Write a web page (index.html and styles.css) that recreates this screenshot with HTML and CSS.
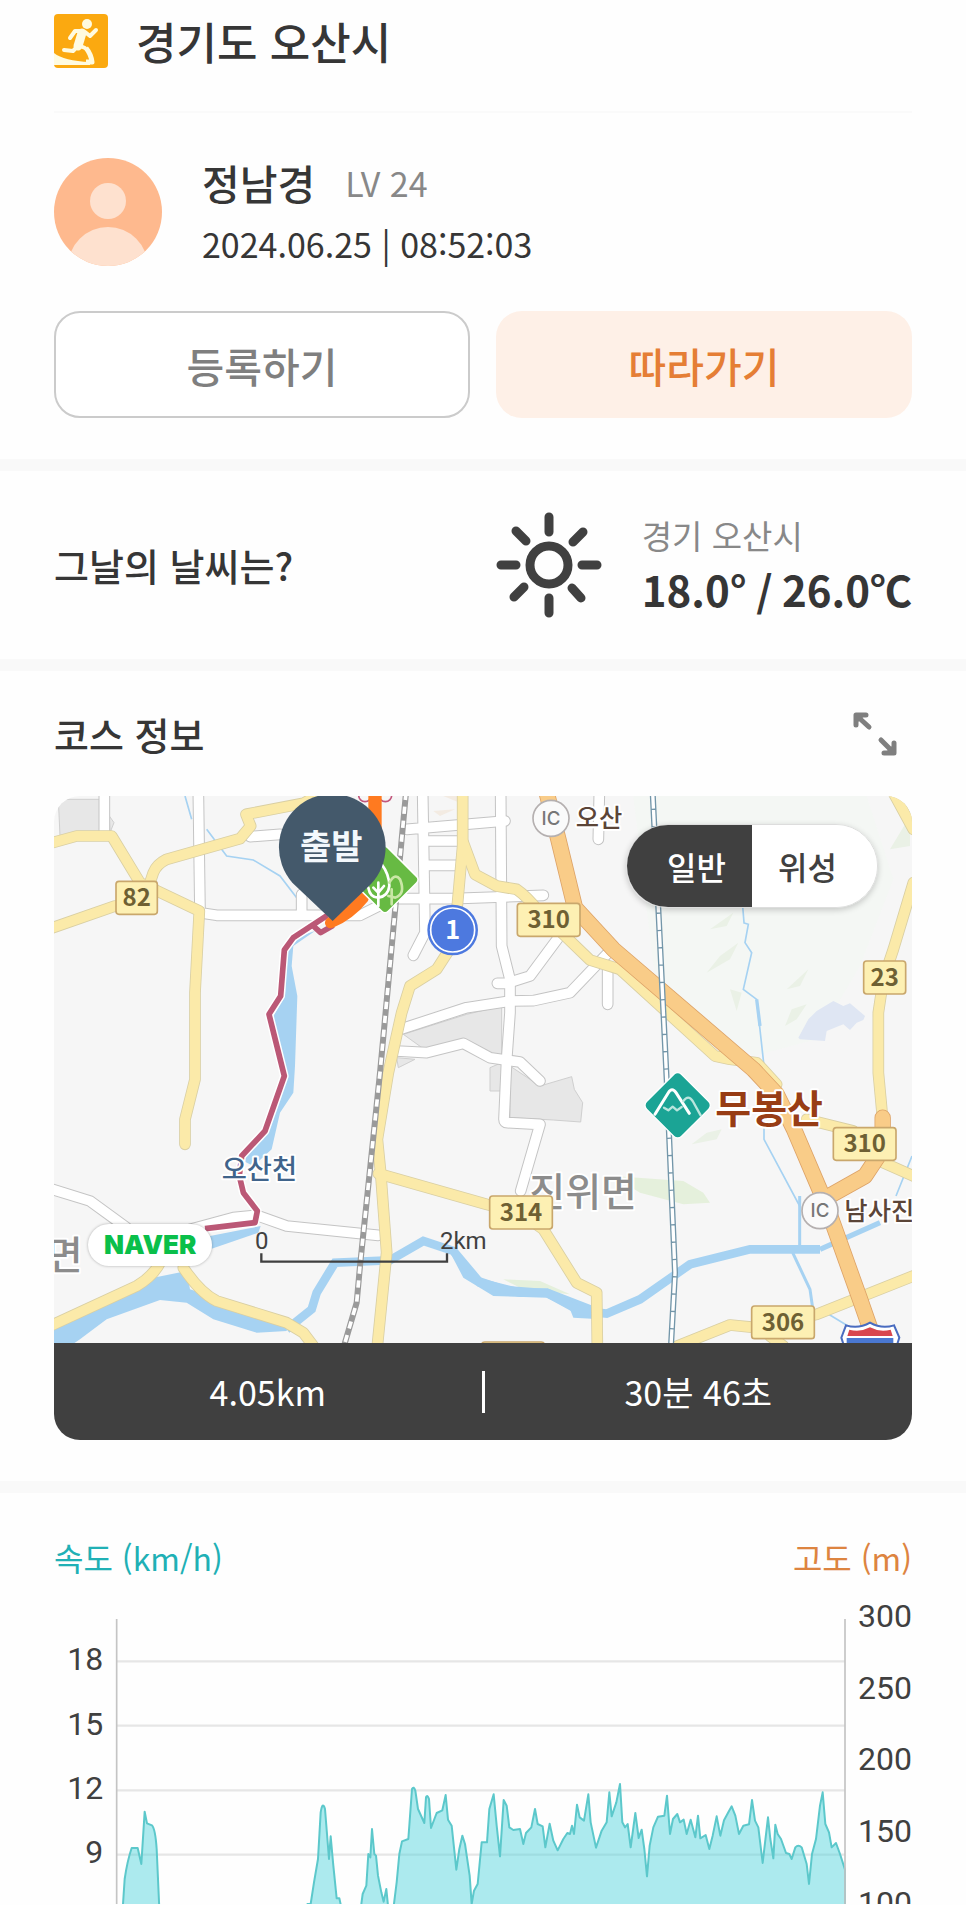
FILE: index.html
```html
<!DOCTYPE html>
<html lang="ko">

<head>
    <meta charset="UTF-8">
    <meta name="viewport" content="width=device-width, initial-scale=1.0">
    <title>경기도 오산시</title>
    <link rel="stylesheet" href="styles.css">
</head>

<body>
    <header class="page-header">
        <svg class="run-icon" viewBox="0 0 54 54" aria-hidden="true">
            <rect width="54" height="54" rx="4" fill="#fba910"/>
            <path d="M0 39Q10 47 36 48V51H0Z" fill="#fffbe0"/>
            <circle cx="33" cy="10" r="5" fill="#fffbe0"/>
            <g fill="none" stroke="#fffbe0" stroke-linecap="round" stroke-linejoin="round">
                <path d="M28 19L24 32" stroke-width="9"/>
                <path d="M28 17L21 17L16 24M31 18L36 22L42 16M23 33L19 37L10 36M24 31L31 34" stroke-width="4"/>
                <path d="M32 34Q37 40 38 48H32" stroke-width="5" stroke-linecap="butt"/>
            </g>
        </svg>
        <h1>경기도 오산시</h1>
    </header>

    <section class="profile">
        <div class="user">
            <svg class="avatar" viewBox="0 0 108 108" aria-hidden="true">
                <clipPath id="avatarClip"><circle cx="54" cy="54" r="54"/></clipPath>
                <g clip-path="url(#avatarClip)">
                    <rect width="108" height="108" fill="#feb98e"/>
                    <circle cx="54" cy="43" r="18" fill="#fee1cf"/>
                    <circle cx="54" cy="109" r="40" fill="#fee1cf"/>
                </g>
            </svg>
            <div class="user-info">
                <div class="user-name"><strong>정남경</strong><span class="level">LV 24</span></div>
                <div class="date">2024.06.25 | 08:52:03</div>
            </div>
        </div>
        <div class="actions">
            <button type="button" class="btn btn-outline">등록하기</button>
            <button type="button" class="btn btn-follow">따라가기</button>
        </div>
    </section>

    <section class="weather">
        <h2>그날의 날씨는?</h2>
        <svg class="sun" viewBox="0 0 106 106" fill="none" stroke="#404040" stroke-width="9" stroke-linecap="round" aria-hidden="true">
            <circle cx="53" cy="53" r="19"/>
            <path d="M53 5V20M53 86V101M5 53H20M86 53H101M20 19L30 29M77 30L87 20M18 85L28 75M76 76L85 86"/>
        </svg>
        <div class="weather-info">
            <div class="place">경기 오산시</div>
            <div class="temp">18.0° / 26.0℃</div>
        </div>
    </section>

    <section class="course">
        <div class="course-head">
            <h2>코스 정보</h2>
            <button type="button" class="expand" aria-label="지도 확대">
                <svg viewBox="0 0 44 44" aria-hidden="true">
                    <g fill="none" stroke="#7f7f7f" stroke-width="5" stroke-linecap="round" stroke-linejoin="round">
                        <path d="M3 13V3H13M4 4L16 15M41 31V41H31M28 28L40 40"/>
                    </g>
                    <path d="M2 2H13L2 13ZM42 42H31L42 31Z" fill="#7f7f7f"/>
                </svg>
            </button>
        </div>

        <div class="course-card">
            <div class="map">
                <svg class="map-canvas" viewBox="42 50 2574 1641" role="img" aria-label="오산천 코스 지도">
                    <defs>
                        <g id="minorRoads">
                            <path d="M475 40L480 400L530 408H960L1060 358H1240L1510 348"/>
                            <path d="M193 40V165M630 172L720 165M785 345V400"/>
                            <path d="M1148 40L1155 460L1120 528M1100 150L1395 125M1160 185H1260M1160 258H1260"/>
                            <path d="M1382 40L1385 500L1410 600V700L1400 840L1392 1020Q1392 1030 1402 1030L1500 1035L1442 1235"/>
                            <path d="M1678 40L1675 180M1570 455L1470 590L1400 612H1372M1703 560V675"/>
                            <path d="M1700 525L1590 640L1480 664L1410 665L1280 685L1080 750"/>
                            <path d="M1070 815L1160 820L1270 792L1350 835L1440 848L1500 905"/>
                            <path d="M30 1228L150 1265L260 1345M450 1350L580 1315L650 1308L740 1340L1015 1368"/>
                        </g>
                        <g id="mainRoads">
                            <path d="M30 192L110 170H215L300 310L478 395L465 640V900L435 1020V1095"/>
                            <path d="M30 448L225 380M325 325L340 280Q350 255 380 240L600 178L632 140L618 105L790 72L850 40"/>
                            <path d="M1268 40V200L1250 400L1235 500L1190 570L1110 620L1085 700L1045 880L1012 1080L1022 1180L1040 1420L1012 1700"/>
                            <path d="M1270 190L1305 285L1370 320L1430 330Q1460 350 1500 400L1570 465L1650 542L1740 570L2025 830L2070 840L2150 850L2210 915"/>
                            <path d="M1015 1183L1340 1275L1440 1300L1510 1350L1610 1510L1670 1540L1672 1700"/>
                            <path d="M30 1640L290 1520Q340 1490 360 1450M430 1465Q480 1540 530 1565L740 1630L790 1660L820 1700"/>
                            <path d="M2560 40L2620 150M2620 310L2560 510L2530 600L2515 700V880L2528 1020"/>
                            <path d="M2300 1020L2440 1055M2530 1150L2620 1190"/>
                            <path d="M1900 1705L2070 1637L2150 1645L2330 1605L2620 1490M2190 1670L2230 1700"/>
                        </g>
                        <g id="highways">
                            <path d="M1520 40L1555 180L1605 385L1720 510L2140 870L2210 945L2262 1050L2360 1280L2460 1560L2495 1660"/>
                            <path d="M2528 1015V1110L2475 1190L2350 1260"/>
                        </g>
                    </defs>

                    <rect x="42" y="50" width="2574" height="1641" fill="#f6f6f6"/>

                    <!-- hills and forest -->
                    <g fill="#eaf1e6">
                        <path d="M1780 50H2480L2560 300L2460 560L2330 780L2140 830L1850 640Z" fill="#f4f7f4"/>
                        <path d="M2010 450L2080 400L2060 440ZM2000 580L2040 530L2095 490L2070 540ZM2240 630L2305 570L2280 620ZM2070 630L2105 640L2090 695ZM2235 740L2255 690L2300 675L2270 720ZM1955 1095L2000 1060L2045 1050L2030 1080ZM2550 210L2610 110V200Z"/>
                        <path d="M1720 1190L1930 1205L1990 1240L2010 1270L1930 1275L1800 1240ZM1390 1500L1500 1505L1590 1545L1450 1530Z" fill="#e5f0dc"/>
                    </g>
                    <path d="M1180 95L1245 90L1200 110ZM1210 50L1270 75V50Z" fill="#f3ebe2"/>

                    <!-- built-up blocks -->
                    <g fill="#e7e7e7" stroke="#cfcfcf" stroke-width="3">
                        <path d="M55 60H180V160L60 170ZM208 110L222 130L210 160Z"/>
                        <path d="M1090 765L1280 705L1385 680V825L1345 835L1270 785L1150 808ZM1350 865L1385 850V935H1350Z"/>
                        <path d="M1410 860L1500 920L1595 892L1603 930L1628 970L1622 1028L1540 1022L1410 1015ZM1070 835L1125 840L1075 865Z"/>
                    </g>

                    <!-- water -->
                    <path d="M2275 775L2305 720L2330 695L2380 665L2410 680L2430 672L2475 710L2470 722L2450 730L2430 752L2410 735L2360 755L2355 785L2280 780Z" fill="#dfe6f3"/>
                    <g fill="#a6d2f2">
                        <path d="M825 455L760 500L755 560L772 650L765 860L760 940L720 1000L695 1110L640 1160L600 1140L670 1080L735 890L700 710L735 650L740 520L780 470Z"/>
                        <path d="M510 1370L662 1340L655 1360L515 1408Z"/>
                        <path d="M42 1650L340 1495L440 1475L450 1530L600 1580L745 1625L740 1655L650 1660L520 1620L440 1570L360 1562L200 1620L120 1680L90 1700H42Z"/>
                        <path d="M1220 1400L1310 1490L1400 1520L1530 1530L1660 1580L1655 1618L1600 1615L1590 1590L1520 1555L1360 1550L1270 1495Z"/>
                    </g>
                    <g fill="none" stroke="#a6d2f2">
                        <path d="M740 1650L815 1590L830 1540L885 1450L1050 1443L1150 1385L1240 1415L1320 1510L1440 1540L1520 1540L1620 1595L1700 1603L1800 1560L1950 1455L2130 1410H2340" stroke-width="26"/>
                        <path d="M2340 1410L2520 1330" stroke-width="16"/>
                        <path d="M2279 1250V1400M2258 1420L2310 1530L2320 1600" stroke-width="9"/>
                        <path d="M435 50L455 120M500 150L560 230L640 242L720 290L770 355M2110 430L2125 435L2115 490L2135 520L2110 630L2150 660L2172 860V1080L2279 1280M2616 1130L2568 1250M2350 1595L2440 1650M2108 380L2112 430" stroke-width="5"/>
                        <path d="M2150 660L2160 740" stroke-width="10"/>
                    </g>

                    <!-- roads: casing first, then fill -->
                    <g fill="none" stroke-linecap="round" stroke-linejoin="round">
                        <use href="#minorRoads" stroke="#c4c4c4" stroke-width="35"/>
                        <use href="#minorRoads" stroke="#fff" stroke-width="29"/>
                        <use href="#mainRoads" stroke="#d9cfa3" stroke-width="35"/>
                        <use href="#mainRoads" stroke="#fbeaa9" stroke-width="30"/>
                        <use href="#highways" stroke="#dda368" stroke-width="49"/>
                        <use href="#highways" stroke="#f9cc88" stroke-width="44"/>
                    </g>

                    <!-- railways -->
                    <g fill="none">
                        <path d="M1098 40L1020 880L960 1460L950 1570L912 1700" stroke="#9a9a9a" stroke-width="18"/>
                        <path d="M1098 40L1020 880L960 1460L950 1570L912 1700" stroke="#fff" stroke-width="11" stroke-dasharray="22 20"/>
                        <path d="M1838 40L1880 900L1905 1480L1893 1700" stroke="#7396a9" stroke-width="18"/>
                        <path d="M1838 40L1880 900L1905 1480L1893 1700" stroke="#fff" stroke-width="10" stroke-dasharray="48 4"/>
                    </g>

                    <!-- recorded course -->
                    <g fill="none" stroke-linejoin="round">
                        <path d="M862 408L760 475L733 512L722 650L687 705L733 890L675 1055L605 1130L598 1190L610 1240L652 1295L645 1330L495 1348" stroke="#fff" stroke-width="26"/>
                        <path d="M862 408L760 475L733 512L722 650L687 705L733 890L675 1055L605 1130L598 1190L610 1240L652 1295L645 1330L495 1348M820 440L842 460L880 438" stroke="#bb5876" stroke-width="17"/>
                        <circle cx="975" cy="48" r="19" stroke="#c2577c" stroke-width="5"/>
                        <circle cx="1036" cy="48" r="19" stroke="#c2577c" stroke-width="5"/>
                        <path d="M1005 40V170" stroke="#ff7a20" stroke-width="40"/>
                        <path d="M970 355Q930 405 872 430" stroke="#ff7a20" stroke-width="34" stroke-linecap="round"/>
                    </g>

                    <!-- park marker -->
                    <rect x="961" y="227" width="148" height="148" rx="14" transform="rotate(45 1035 301)" fill="#67ba43" stroke="#fff" stroke-width="5"/>
                    <g fill="none" stroke="#fff" stroke-width="8" stroke-linecap="round">
                        <path d="M1015 380V310M985 325Q990 355 1015 355Q1045 350 1048 320Q1048 285 1025 255M1000 325L1015 340L1032 320"/>
                        <path d="M1055 375V330M1048 310Q1065 280 1080 300Q1098 345 1065 355L1045 350" stroke="#c9e7a6"/>
                    </g>

                    <!-- start pin -->
                    <path d="M878 425L757 310A160 160 0 1 1 993 314Z" fill="#44596b"/>
                    <text x="874" y="238" text-anchor="middle" class="pin-text">출발</text>

                    <!-- mountain marker -->
                    <rect x="1839" y="904" width="148" height="148" rx="16" transform="rotate(45 1913 978)" fill="#1ba495" stroke="#fff" stroke-width="4"/>
                    <g fill="none" stroke="#fff" stroke-width="9" stroke-linecap="round" stroke-linejoin="round">
                        <path d="M1845 1005L1885 940Q1896 922 1908 940L1948 1002"/>
                        <path d="M1872 985L1885 993L1898 982L1911 993L1925 983M1930 965Q1945 945 1958 965L1982 1008" stroke="#b9e5dd" stroke-width="7"/>
                    </g>

                    <g class="map-names">
                        <text x="2026" y="1030" class="mountain">무봉산</text>
                        <text x="1468" y="1280" class="town">진위면</text>
                        <text x="128" y="1468" text-anchor="end" class="town">면</text>
                        <text x="545" y="1200" class="stream">오산천</text>
                        <text x="1607" y="144" class="junction">오산</text>
                        <text x="2413" y="1322" class="junction">남사진</text>
                    </g>

                    <!-- road numbers -->
                    <g class="road-no" text-anchor="middle">
                        <rect x="228" y="306" width="124" height="99" rx="9"/><text x="290" y="380">82</text>
                        <rect x="1432" y="372" width="188" height="99" rx="9"/><text x="1526" y="447">310</text>
                        <rect x="2471" y="545" width="126" height="99" rx="9"/><text x="2534" y="619">23</text>
                        <rect x="2380" y="1045" width="188" height="98" rx="9"/><text x="2474" y="1119">310</text>
                        <rect x="1349" y="1250" width="188" height="99" rx="9"/><text x="1443" y="1325">314</text>
                        <rect x="2135" y="1580" width="188" height="98" rx="9"/><text x="2229" y="1654">306</text>
                        <rect x="1325" y="1688" width="188" height="98" rx="9"/>
                    </g>
                    <g class="ic" text-anchor="middle">
                        <circle cx="1533" cy="117" r="54"/><text x="1533" y="136">IC</text>
                        <circle cx="2340" cy="1294" r="54"/><text x="2340" y="1314">IC</text>
                    </g>
                    <circle cx="1238" cy="452" r="76" fill="#4d79df"/>
                    <circle cx="1238" cy="452" r="66" fill="none" stroke="#fff" stroke-width="5"/>
                    <text x="1238" y="479" text-anchor="middle" class="route-no">1</text>
                    <path d="M2418 1638Q2455 1650 2490 1630Q2525 1650 2562 1638L2578 1675L2570 1700H2412L2404 1675Z" fill="#fff" stroke="#4a6cc0" stroke-width="6"/>
                    <path d="M2428 1651Q2460 1660 2490 1644Q2520 1660 2552 1651L2558 1670H2422Z" fill="#d8474f"/>
                    <path d="M2420 1676H2560V1700H2420Z" fill="#4a78d2"/>

                    <path d="M664 1422V1447H1221V1422" fill="none" stroke="#404040" stroke-width="7"/>
                    <text x="665" y="1409" text-anchor="middle" class="scale-text">0</text>
                    <text x="1270" y="1409" text-anchor="middle" class="scale-text">2km</text>
                </svg>
                <div class="map-type" role="group" aria-label="지도 유형">
                    <button type="button" class="active" aria-pressed="true">일반</button>
                    <button type="button" aria-pressed="false">위성</button>
                </div>
                <a href="#" class="naver">NAVER</a>
            </div>
            <div class="summary">
                <div>4.05km</div>
                <div>30분 46초</div>
            </div>
        </div>
    </section>

    <section class="record">
        <div class="chart-head">
            <span class="speed">속도 (km/h)</span>
            <span class="altitude">고도 (m)</span>
        </div>
        <svg class="chart" viewBox="42 0 2574 915" role="img" aria-label="속도와 고도 그래프">
            <path d="M230 187H2415M230 380H2415M230 574H2415M230 767H2415" stroke="#e6e6e6" stroke-width="7"/>
            <path class="area" d="M248 930L254 840Q262 785 275 747H293L304 795L314 638L321 673L336 679Q346 690 350 750L358 930M800 915H812L822 850L834 780L842 640Q848 605 855 630L867 780L872 712L880 800L890 898H898L905 930M962 930L968 885L979 860L985 765L991 775L996 690L1003 765L1008 770L1014 830L1024 880L1031 908L1039 870L1045 930M1060 930L1070 850L1078 765L1086 727L1105 720L1116 570Q1121 560 1126 575L1134 630L1153 672L1158 595Q1162 585 1167 600L1173 687L1190 642L1207 634L1217 588L1224 662L1235 680L1249 812L1258 750L1267 710L1275 735L1289 830L1295 915L1302 875L1313 855L1325 730H1341L1348 630L1361 586L1370 680L1380 772L1391 603L1400 620L1408 685L1420 693L1440 690L1450 735L1458 702L1474 685L1485 630L1493 675L1508 682L1516 745L1529 674L1540 725L1553 754L1570 720L1582 702L1590 705L1596 680L1602 705L1611 617L1619 655L1632 665L1645 586L1652 670L1668 746L1685 695L1700 670L1708 580L1715 652L1729 610L1740 555L1747 670L1755 685L1763 675L1772 745L1786 642L1796 717L1805 692L1813 750L1821 832L1829 740L1840 685L1854 653L1873 650L1881 590L1890 705L1899 660L1912 645L1920 670L1931 662L1940 705L1952 662L1966 715L1974 650L1981 718L1997 708L2008 750L2018 710L2030 652L2041 710L2052 664L2065 640L2075 622L2086 650L2097 705L2110 680L2127 676L2136 603L2145 665L2155 685L2168 792L2184 655L2191 720L2200 778L2206 677L2213 705L2223 720L2238 762L2248 765L2255 780L2266 745Q2275 735 2285 745L2300 795L2307 855L2316 765L2328 720L2340 620L2348 580L2356 675L2367 700L2375 745L2388 732L2400 765L2415 812V930Z"/>
            <path d="M230 60V915M2415 60V915" stroke="#c4c4c4" stroke-width="5"/>
            <g class="tick" text-anchor="end">
                <text x="190" y="214">18</text>
                <text x="190" y="407">15</text>
                <text x="190" y="600">12</text>
                <text x="190" y="793">9</text>
                <text x="2616" y="85">300</text>
                <text x="2616" y="300">250</text>
                <text x="2616" y="514">200</text>
                <text x="2616" y="729">150</text>
                <text x="2616" y="944">100</text>
            </g>
        </svg>
    </section>
</body>

</html>
```
FILE: styles.css
```css
* {
    box-sizing: border-box;
}

body {
    margin: 0;
    background-color: #fefefe;
    color: #363636;
    font-family: 'Noto Sans CJK KR', sans-serif;
    font-size: 34px;
}

h1,
h2 {
    margin: 0;
    font-weight: 500;
}

h2 {
    font-size: 38px;
    line-height: 48px;
}

button {
    font-family: inherit;
    cursor: pointer;
}

svg {
    display: block;
}

.page-header {
    display: flex;
    align-items: center;
    gap: 28px;
    margin: 0 54px;
    padding: 14px 0 43px;
    border-bottom: 2px solid #fafafa;
}

.page-header h1 {
    font-size: 44px;
    line-height: 54px;
}

.run-icon {
    width: 54px;
    height: 54px;
}

/* profile */
.profile {
    padding: 45px 54px 41px;
    border-bottom: 12px solid #f9f9f9;
}

.user {
    display: flex;
    gap: 40px;
}

.avatar {
    width: 108px;
    height: 108px;
}

.user-name {
    display: flex;
    align-items: center;
    gap: 30px;
    height: 48px;
}

.user-name strong {
    font-size: 41px;
    font-weight: 500;
}

.level {
    color: #888;
}

.date {
    line-height: 44px;
    margin-top: 16px;
}

.actions {
    display: grid;
    grid-template-columns: 1fr 1fr;
    gap: 26px;
    margin-top: 45px;
}

.btn {
    height: 107px;
    border: none;
    border-radius: 26px;
    font-size: 41px;
    font-weight: 500;
}

.btn-outline {
    background-color: #fff;
    border: 2px solid #cbcbcb;
    color: #7f7f7f;
}

.btn-follow {
    background-color: #fef0e7;
    color: #e57e35;
}

/* weather */
.weather {
    display: flex;
    align-items: center;
    height: 200px;
    padding: 0 54px;
    border-bottom: 12px solid #f9f9f9;
}

.sun {
    width: 106px;
    height: 106px;
    margin-left: auto;
    margin-right: 40px;
}

.place {
    color: #888;
    font-size: 33px;
    line-height: 48px;
}

.temp {
    font-size: 42px;
    font-weight: 700;
    line-height: 60px;
    white-space: nowrap;
}

/* course */
.course {
    padding: 0 54px 41px;
    border-bottom: 12px solid #f9f9f9;
}

.course-head {
    display: flex;
    align-items: center;
    justify-content: space-between;
    height: 125px;
    padding-right: 15px;
}

.expand {
    padding: 0;
    border: none;
    background: none;
}

.expand svg {
    width: 44px;
    height: 44px;
}

.course-card {
    overflow: hidden;
    border-radius: 26px;
}

.map {
    position: relative;
}

.map-canvas {
    width: 100%;
    height: auto;
    font-family: 'Noto Sans CJK KR', sans-serif;
}

.pin-text {
    fill: #f3f8fc;
    font-size: 102px;
    font-weight: 700;
}

.map-names text {
    font-weight: 500;
    stroke: #fff;
    stroke-width: 12px;
    stroke-linejoin: round;
    paint-order: stroke;
}

.map-names .mountain {
    fill: #983d15;
    font-size: 117px;
    font-weight: 700;
}

.map-names .town {
    fill: #8c8c8c;
    font-size: 117px;
}

.map-names .stream {
    fill: #40648b;
    font-size: 82px;
}

.map-names .junction {
    fill: #5b4538;
    font-size: 76px;
}

.road-no rect {
    fill: #fdf0b3;
    stroke: #c9a76c;
    stroke-width: 5px;
}

.road-no text {
    fill: #6e6033;
    font-size: 72px;
    font-weight: 700;
}

.ic circle {
    fill: #fafafa;
    stroke: #b5b0b0;
    stroke-width: 5px;
}

.ic text {
    fill: #777;
    font-family: Inter, sans-serif;
    font-size: 56px;
    font-weight: 500;
}

.route-no {
    fill: #fff;
    font-size: 76px;
    font-weight: 700;
}

.scale-text {
    fill: #404040;
    font-family: Roboto, sans-serif;
    font-size: 72px;
}

.map-type {
    position: absolute;
    top: 28px;
    right: 34px;
    display: flex;
    overflow: hidden;
    width: 252px;
    height: 84px;
    border: 1px solid #ddd;
    border-radius: 42px;
    box-shadow: 0 2px 6px rgba(0, 0, 0, 0.2);
}

.map-type button {
    flex: 1;
    padding: 0;
    border: none;
    background-color: #fff;
    color: #404040;
    font-size: 32px;
    font-weight: 500;
}

.map-type .active {
    padding-left: 14px;
    background-color: #404040;
    color: #fff;
}

.map-type button:last-child {
    padding-right: 14px;
}

.naver {
    position: absolute;
    bottom: 77px;
    left: 34px;
    padding: 0 16px;
    border-radius: 21px;
    background-color: #fff;
    box-shadow: 0 0 3px rgba(0, 0, 0, 0.3);
    color: #0abf4a;
    font-family: Inter, sans-serif;
    font-size: 26px;
    font-weight: 900;
    line-height: 42px;
    text-decoration: none;
}

.summary {
    display: flex;
    align-items: center;
    height: 97px;
    background-color: #404040;
    color: #fff;
    line-height: 42px;
    text-align: center;
}

.summary div {
    flex: 1;
}

.summary div + div {
    border-left: 3px solid #fff;
}

/* chart */
.record {
    padding: 0 54px;
}

.chart-head {
    display: flex;
    align-items: center;
    justify-content: space-between;
    height: 106px;
    padding-top: 22px;
    font-size: 32px;
}

.speed {
    color: #20b0b5;
}

.altitude {
    color: #dd8440;
}

.chart {
    width: 100%;
    height: auto;
}

.area {
    fill: rgba(64, 208, 217, 0.43);
    stroke: #5cc8cb;
    stroke-width: 6px;
    stroke-linejoin: round;
}

.tick {
    fill: #404040;
    font-family: Roboto, sans-serif;
    font-size: 96px;
}
```
